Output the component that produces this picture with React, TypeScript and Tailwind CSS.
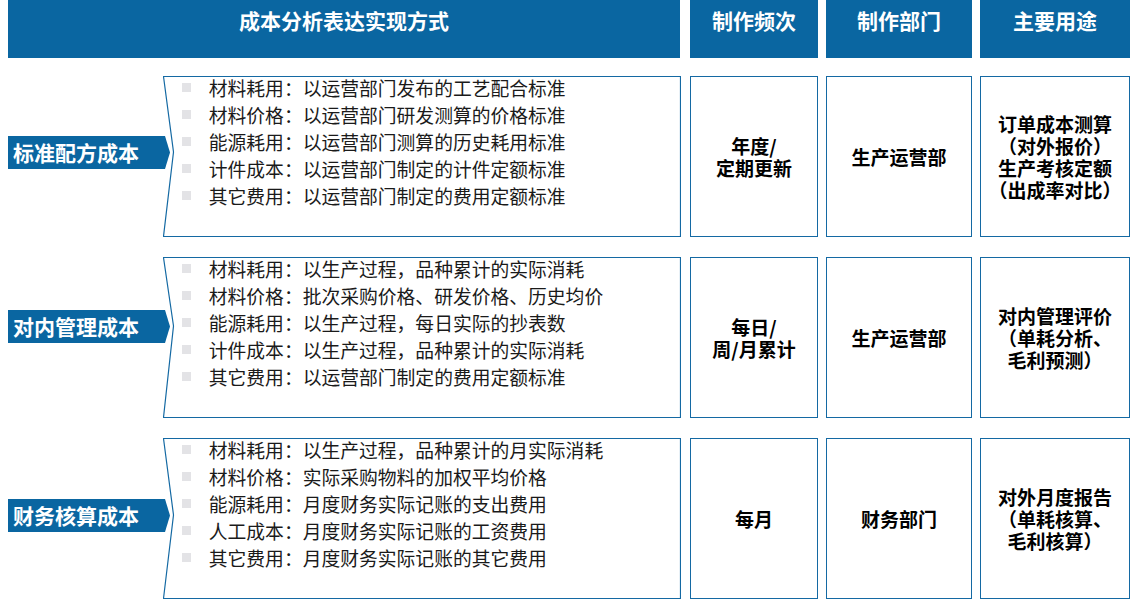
import React from "react";

const FONT = { fontFamily: '"Noto Sans CJK SC", "Noto Sans", sans-serif' };

type Row = {
  label: string;
  labelTop: string;
  tipY: number;
  items: string[];
  freq: string[];
  dept: string[];
  usage: string[];
};

const rows: Row[] = [
  {
    label: "标准配方成本",
    labelTop: "mt-[60px]",
    tipY: 76,
    items: [
      "材料耗用：以运营部门发布的工艺配合标准",
      "材料价格：以运营部门研发测算的价格标准",
      "能源耗用：以运营部门测算的历史耗用标准",
      "计件成本：以运营部门制定的计件定额标准",
      "其它费用：以运营部门制定的费用定额标准",
    ],
    freq: ["年度/", "定期更新"],
    dept: ["生产运营部"],
    usage: ["订单成本测算", "（对外报价）", "生产考核定额", "（出成率对比）"],
  },
  {
    label: "对内管理成本",
    labelTop: "mt-[53px]",
    tipY: 69,
    items: [
      "材料耗用：以生产过程，品种累计的实际消耗",
      "材料价格：批次采购价格、研发价格、历史均价",
      "能源耗用：以生产过程，每日实际的抄表数",
      "计件成本：以生产过程，品种累计的实际消耗",
      "其它费用：以运营部门制定的费用定额标准",
    ],
    freq: ["每日/", "周/月累计"],
    dept: ["生产运营部"],
    usage: ["对内管理评价", "（单耗分析、", "毛利预测）"],
  },
  {
    label: "财务核算成本",
    labelTop: "mt-[61px]",
    tipY: 77,
    items: [
      "材料耗用：以生产过程，品种累计的月实际消耗",
      "材料价格：实际采购物料的加权平均价格",
      "能源耗用：月度财务实际记账的支出费用",
      "人工成本：月度财务实际记账的工资费用",
      "其它费用：月度财务实际记账的其它费用",
    ],
    freq: ["每月"],
    dept: ["财务部门"],
    usage: ["对外月度报告", "（单耗核算、", "毛利核算）"],
  },
];

function Panel({ row }: { row: Row }) {
  const w = 518;
  const h = 161;
  return (
    <div className="relative -ml-[7px] h-[161px] w-[518px]">
      <svg className="absolute inset-0" width={w} height={h} viewBox={`0 0 ${w} ${h}`}>
        <polygon
          points={`0.5,0.5 ${w - 0.5},0.5 ${w - 0.5},${h - 0.5} 0.5,${h - 0.5} 10.5,${row.tipY}`}
          fill="white"
          stroke="#1469a3"
          strokeWidth="1.2"
        />
      </svg>
      <ul className="relative -mt-[2px] pl-[19px]">
        {row.items.map((t) => (
          <li key={t} className="flex h-[27px] items-center text-[18.8px] leading-[27px] text-[#1a1a1a]">
            <span className="mr-[18px] h-[9px] w-[9px] bg-[#e3e3e6]" />
            <span>{t}</span>
          </li>
        ))}
      </ul>
    </div>
  );
}

function Cell({ lines, width }: { lines: string[]; width: string }) {
  return (
    <div
      className={`flex h-[161px] ${width} flex-col items-center justify-center border border-[#1469a3] text-[19px] font-bold leading-[22px] text-black`}
    >
      {lines.map((l) => (
        <div key={l} className="h-[22px] whitespace-nowrap">
          {l}
        </div>
      ))}
    </div>
  );
}

export default function App() {
  return (
    <div className="h-[600px] w-[1133px] overflow-hidden bg-white" style={FONT}>
      <div className="flex pl-[8px]">
        <div className="h-[58px] w-[672px] bg-[#0a66a1] pt-[7px] text-center text-[21px] font-bold leading-[26px] text-white">
          成本分析表达实现方式
        </div>
        <div className="ml-[10px] h-[58px] w-[128px] bg-[#0a66a1] pt-[7px] text-center text-[21px] font-bold leading-[26px] text-white">
          制作频次
        </div>
        <div className="ml-[8px] h-[58px] w-[146px] bg-[#0a66a1] pt-[7px] text-center text-[21px] font-bold leading-[26px] text-white">
          制作部门
        </div>
        <div className="ml-[8px] h-[58px] w-[150px] bg-[#0a66a1] pt-[7px] text-center text-[21px] font-bold leading-[26px] text-white">
          主要用途
        </div>
      </div>
      <div className="mt-[18px] flex flex-col gap-[20px] pl-[8px]">
        {rows.map((row) => (
          <div key={row.label} className="flex">
            <div className="flex w-[672px] items-start">
              <div
                className={`relative z-10 ${row.labelTop} h-[33px] w-[162px] bg-[#0a66a1] pl-[5px] text-[21px] font-bold leading-[33px] text-white`}
                style={{ clipPath: "polygon(0 0, 157px 0, 162px 50%, 157px 100%, 0 100%)" }}
              >
                {row.label}
              </div>
              <Panel row={row} />
            </div>
            <div className="ml-[10px]">
              <Cell lines={row.freq} width="w-[128px]" />
            </div>
            <div className="ml-[8px]">
              <Cell lines={row.dept} width="w-[146px]" />
            </div>
            <div className="ml-[8px]">
              <Cell lines={row.usage} width="w-[150px]" />
            </div>
          </div>
        ))}
      </div>
    </div>
  );
}
